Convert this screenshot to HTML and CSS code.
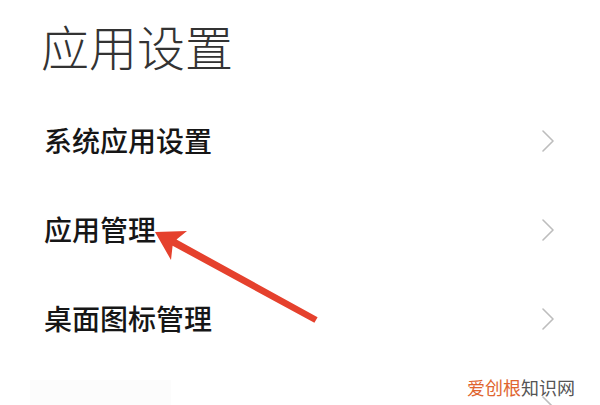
FILE: index.html
```html
<!DOCTYPE html>
<html lang="zh-CN">
<head>
<meta charset="utf-8">
<link rel="stylesheet" href="styles.css">
</head>
<body>
<div class="page">
  <h1 class="title">应用设置</h1>
  <ul class="list">
    <li class="row"><span class="label">系统应用设置</span><svg class="chev" width="12" height="22" viewBox="0 0 12 22"><polyline points="1,1 11,11 1,21" /></svg></li>
    <li class="row"><span class="label">应用管理</span><svg class="chev" width="12" height="22" viewBox="0 0 12 22"><polyline points="1,1 11,11 1,21" /></svg></li>
    <li class="row"><span class="label">桌面图标管理</span><svg class="chev" width="12" height="22" viewBox="0 0 12 22"><polyline points="1,1 11,11 1,21" /></svg></li>
    <li class="row row-faded"><span class="ghost"></span><svg class="chev" width="12" height="22" viewBox="0 0 12 22"><polyline points="1,1 11,11 1,21" /></svg></li>
  </ul>
  <svg class="arrow" width="600" height="405" viewBox="0 0 600 405">
    <polygon points="155,232 187,231 176.5,239.5 317.6,317.3 314.4,322.7 172.6,245.7 171,260" />
  </svg>
  <div class="watermark"><span class="wm-orange">爱创根</span><span class="wm-gray">知识网</span></div>
</div>
</body>
</html>
```
FILE: styles.css
```css
html, body {
  margin: 0;
  padding: 0;
  background: #ffffff;
}
.page {
  position: relative;
  width: 600px;
  height: 405px;
  overflow: hidden;
  font-family: "Noto Sans CJK SC", "Noto Sans", sans-serif;
}
.title {
  margin: 0;
  height: 96px;
  line-height: 90px;
  padding-left: 41px;
  font-size: 48px;
  font-weight: 300;
  color: #333333;
}
.list {
  list-style: none;
  margin: 0;
  padding: 0;
}
.row {
  height: 89px;
  display: flex;
  align-items: center;
  justify-content: space-between;
  padding: 0 46px 0 44px;
}
.label {
  font-size: 28px;
  line-height: 89px;
  font-weight: 500;
  color: #161616;
}
.chev polyline {
  fill: none;
  stroke: #bdbdbd;
  stroke-width: 1.6;
  stroke-linecap: round;
  stroke-linejoin: round;
}
.row-faded {
  align-items: flex-start;
}
.row-faded .chev {
  margin-top: 33px;
}
.ghost {
  display: block;
  width: 141px;
  height: 30px;
  margin: 17px 0 0 -14px;
  background: #fcfcfc;
}
.arrow {
  position: absolute;
  left: 0;
  top: 0;
}
.arrow polygon {
  fill: #e5412d;
}
.watermark {
  position: absolute;
  left: 467px;
  top: 375px;
  font-size: 18px;
  line-height: 24px;
  white-space: nowrap;
}
.wm-orange {
  color: #e0652f;
}
.wm-gray {
  color: #555555;
}
```
